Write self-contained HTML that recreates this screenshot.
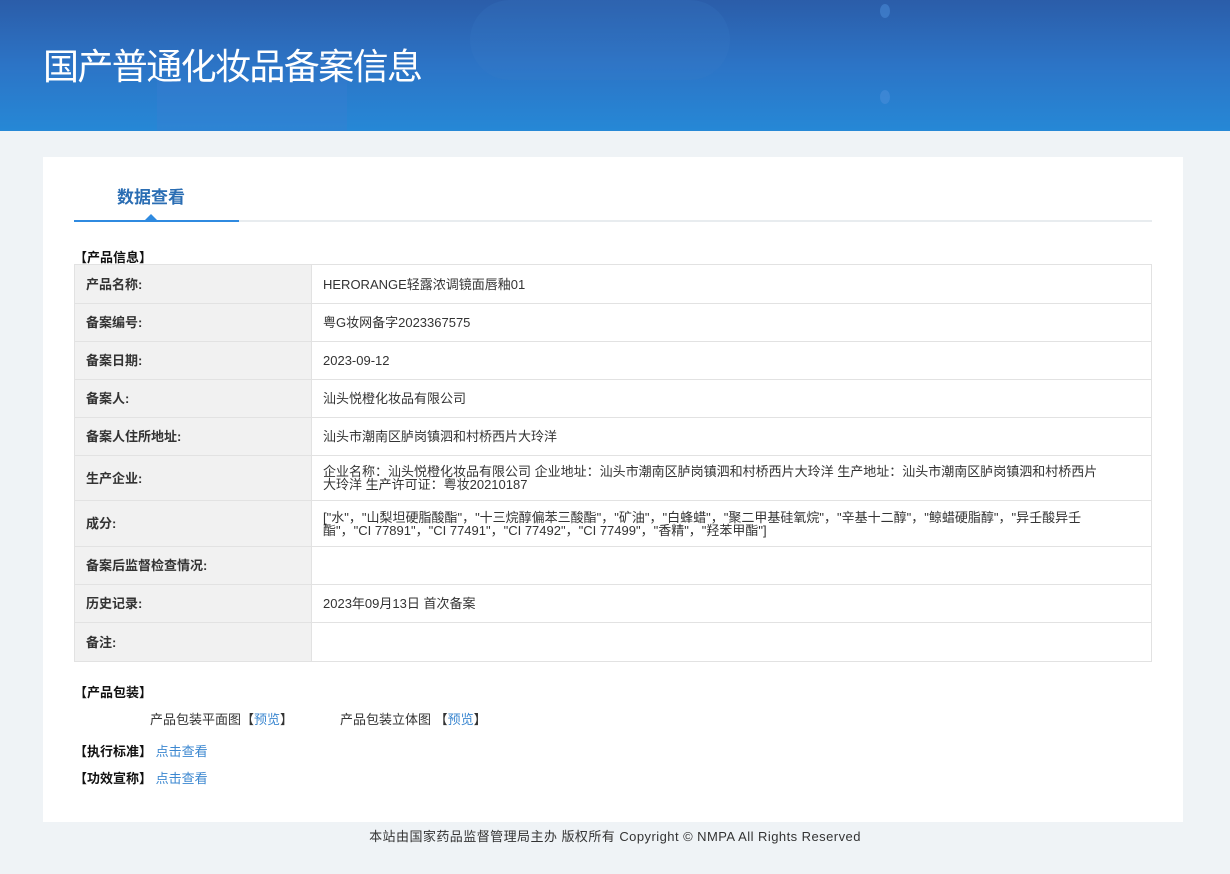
<!DOCTYPE html>
<html><head><meta charset="utf-8"><style>
*{margin:0;padding:0;box-sizing:border-box}
body{width:1230px;height:874px;background:#eff3f6;font-family:"Liberation Sans","Noto Sans CJK SC",sans-serif;font-size:13px;color:#333;position:relative;overflow:hidden}
.hd{position:absolute;left:0;top:0;width:1230px;height:131px;background:linear-gradient(180deg,#2b5da9 0%,#2c74c6 50%,#2688d6 100%);overflow:hidden}
.hd h1{position:absolute;left:43px;top:38px;font-size:36px;font-weight:normal;color:#fff;font-family:"Noto Sans CJK SC",sans-serif;letter-spacing:-1.6px}
.card{position:absolute;left:43px;top:157px;width:1140px;height:665px;background:#fff}
.tab{position:absolute;left:117px;top:183px;font-size:17px;font-weight:bold;color:#2a6db3}
.line{position:absolute;left:74px;top:220px;width:1078px;height:2px;background:#e8ecef}
.line2{position:absolute;left:74px;top:220px;width:165px;height:2px;background:#2f8ae0}
.tri{position:absolute;left:144px;top:214px;width:0;height:0;border-left:7px solid transparent;border-right:7px solid transparent;border-bottom:7px solid #2f8ae0}
.sec{position:absolute;left:74px;font-weight:bold;color:#111;font-size:13px}
table{position:absolute;left:74px;top:264px;width:1078px;border-collapse:collapse;border:1px solid #7fa6e0}
td{border:1px solid #e2e2e2;padding:0 11px;line-height:13px}
td.l{width:237px;background:#f1f1f1;font-weight:bold;color:#333}
td.v{color:#333}
a{color:#3b87d0;text-decoration:none}
.ft{position:absolute;top:826px;left:0;width:1230px;text-align:center;color:#333;letter-spacing:.45px}
</style></head><body>
<div class="hd">
<div style="position:absolute;left:157px;top:80px;width:190px;height:60px;background:#3d7fd2;opacity:.35"></div>
<div style="position:absolute;left:470px;top:0;width:260px;height:80px;border-radius:40px;background:#3a7bc6;opacity:.2"></div>
<div style="position:absolute;left:880px;top:4px;width:10px;height:14px;border-radius:50%;background:#4d8fdc;opacity:.5"></div>
<div style="position:absolute;left:880px;top:90px;width:10px;height:14px;border-radius:50%;background:#4d8fdc;opacity:.5"></div>
<h1>国产普通化妆品备案信息</h1></div>
<div class="card"></div>
<div class="tab">数据查看</div>
<div class="line"></div><div class="line2"></div><div class="tri"></div>
<div class="sec" style="top:247px">【产品信息】</div>
<table>
<tr style="height:39px"><td class="l">产品名称:</td><td class="v">HERORANGE轻露浓调镜面唇釉01</td></tr>
<tr style="height:38px"><td class="l">备案编号:</td><td class="v">粤G妆网备字2023367575</td></tr>
<tr style="height:38px"><td class="l">备案日期:</td><td class="v">2023-09-12</td></tr>
<tr style="height:38px"><td class="l">备案人:</td><td class="v">汕头悦橙化妆品有限公司</td></tr>
<tr style="height:38px"><td class="l">备案人住所地址:</td><td class="v">汕头市潮南区胪岗镇泗和村桥西片大玲洋</td></tr>
<tr style="height:45px"><td class="l">生产企业:</td><td class="v" style="padding-right:50px">企业名称：汕头悦橙化妆品有限公司 企业地址：汕头市潮南区胪岗镇泗和村桥西片大玲洋 生产地址：汕头市潮南区胪岗镇泗和村桥西片大玲洋 生产许可证：粤妆20210187</td></tr>
<tr style="height:46px"><td class="l">成分:</td><td class="v" style="padding-right:50px">["水"，"山梨坦硬脂酸酯"，"十三烷醇偏苯三酸酯"，"矿油"，"白蜂蜡"，"聚二甲基硅氧烷"，"辛基十二醇"，"鲸蜡硬脂醇"，"异壬酸异壬酯"，"CI 77891"，"CI 77491"，"CI 77492"，"CI 77499"，"香精"，"羟苯甲酯"]</td></tr>
<tr style="height:38px"><td class="l">备案后监督检查情况:</td><td class="v"></td></tr>
<tr style="height:38px"><td class="l">历史记录:</td><td class="v">2023年09月13日 首次备案</td></tr>
<tr style="height:39px"><td class="l">备注:</td><td class="v"></td></tr>
</table>
<div class="sec" style="top:682px">【产品包装】</div>
<div style="position:absolute;left:150px;top:709px">产品包装平面图【<a>预览</a>】</div>
<div style="position:absolute;left:340px;top:709px">产品包装立体图 【<a>预览</a>】</div>
<div style="position:absolute;left:74px;top:741px"><b style="color:#111">【执行标准】</b> <a>点击查看</a></div>
<div style="position:absolute;left:74px;top:768px"><b style="color:#111">【功效宣称】</b> <a>点击查看</a></div>
<div class="ft">本站由国家药品监督管理局主办 版权所有 Copyright © NMPA All Rights Reserved</div>
</body></html>
